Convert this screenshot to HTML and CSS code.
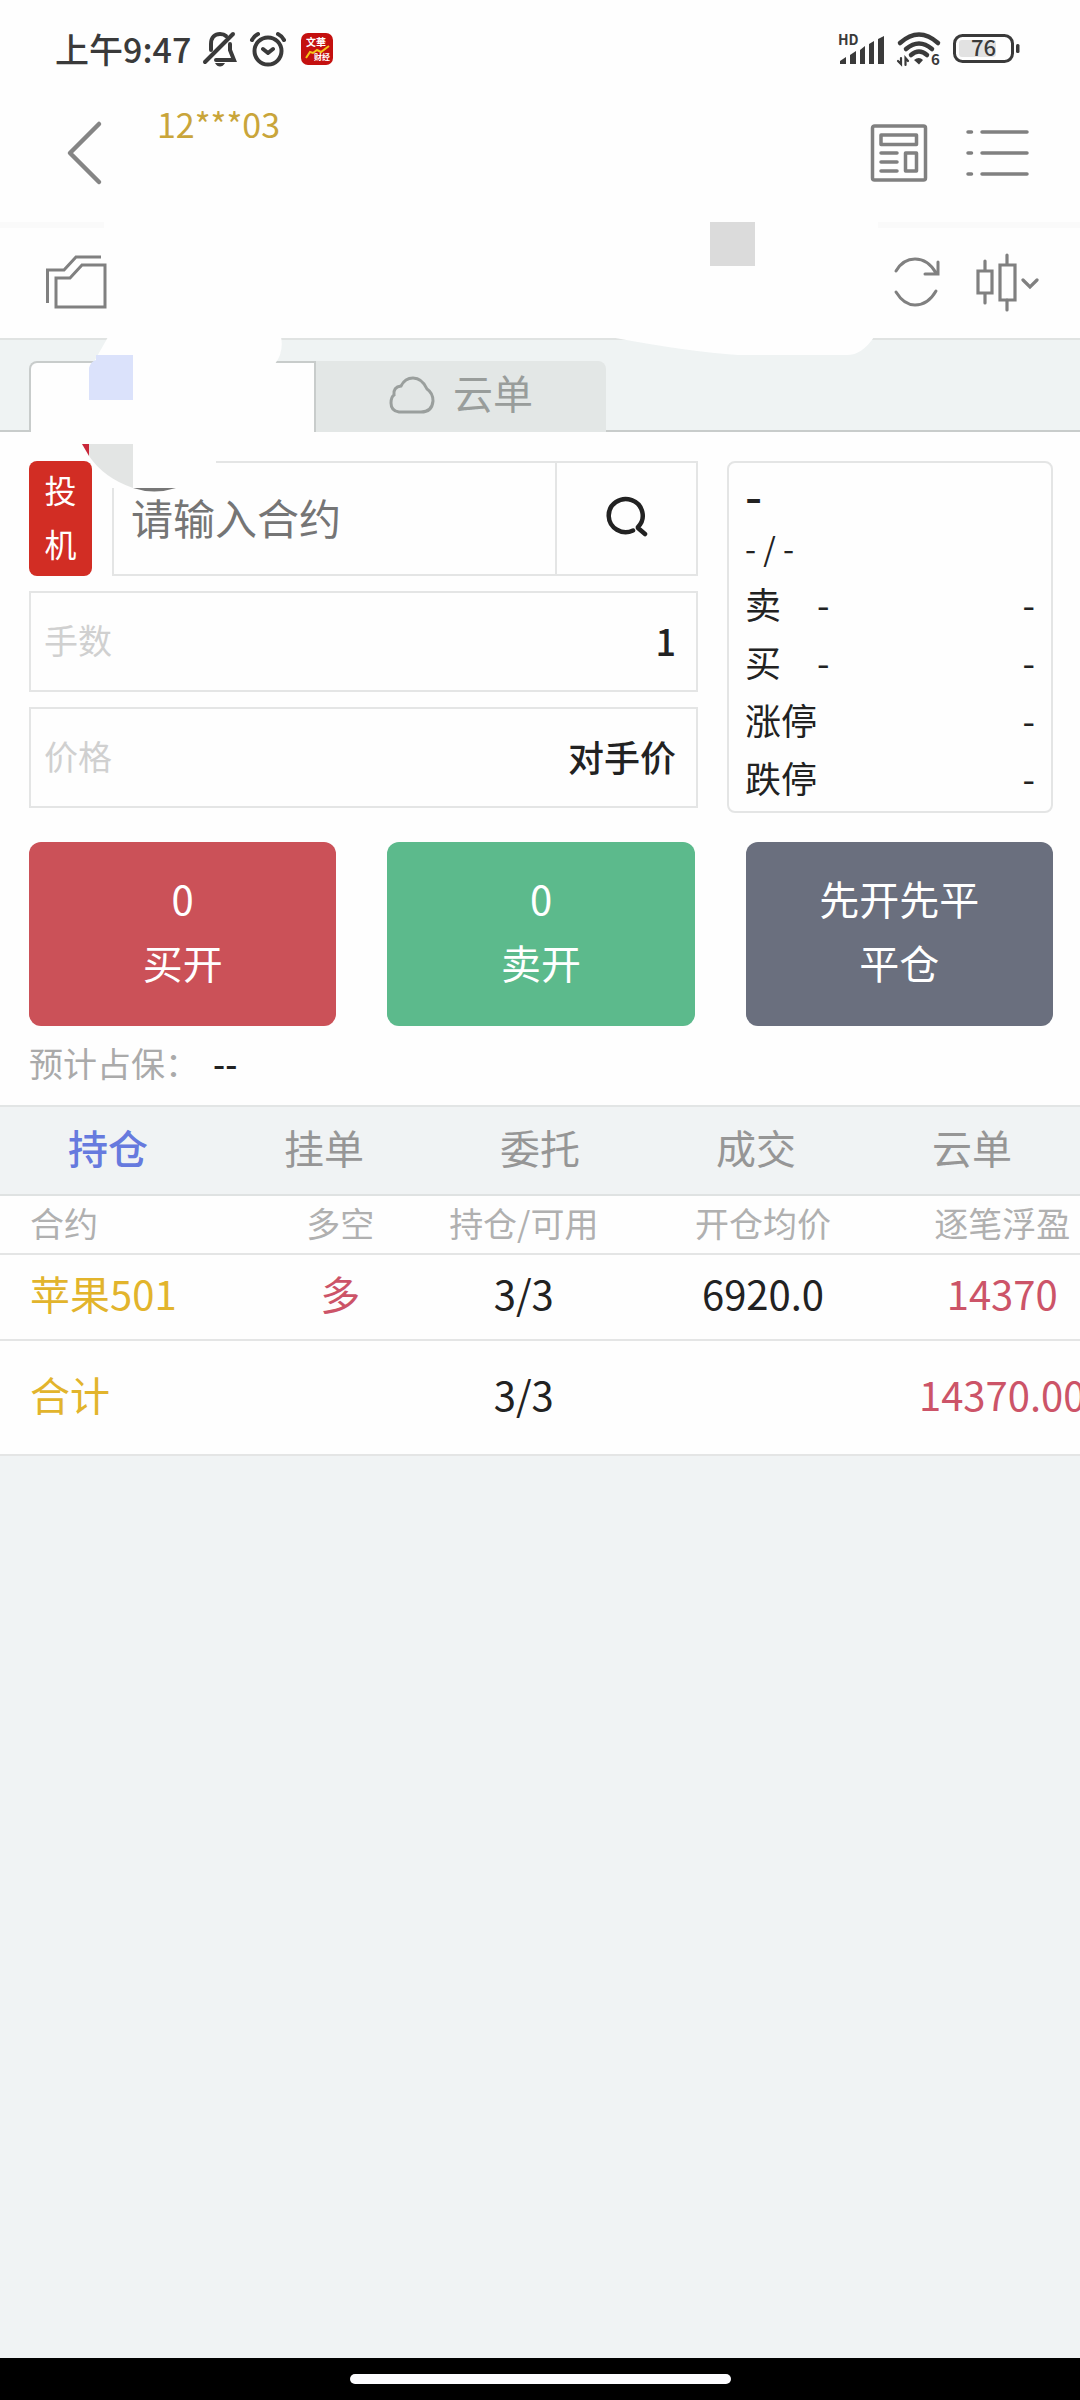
FILE: index.html
```html
<!DOCTYPE html>
<html lang="zh-CN">
<head>
<meta charset="utf-8">
<meta name="viewport" content="width=device-width, initial-scale=1">
<title>交易</title>
<link rel="stylesheet" href="styles.css">
</head>
<body>
<div class="status">
  <div class="status-group">
    <span class="clock">上午9:47</span>
    <svg class="ico-mute" width="34" height="36" viewBox="0 0 34 36" fill="none" stroke="#3a3a3a" stroke-width="4" stroke-linecap="round">
      <path d="M8 19V13C8 6 12 3 17 3C20 3 22 4 23 5M27 13V19L31 29H13"/>
      <path d="M2 31L30 3"/>
      <path d="M12 32H22Q20 35.500 17 35.500Q14 35.500 12 32Z" fill="#3a3a3a" stroke="none"/>
    </svg>
    <svg class="ico-alarm" width="38" height="36" viewBox="0 0 38 36" fill="none" stroke="#3a3a3a" stroke-width="4" stroke-linecap="round" stroke-linejoin="round">
      <circle cx="19" cy="20" r="13.500"/>
      <path d="M14 18L19 22L24 18M3 9Q5 5 9 3M35 9Q33 5 29 3"/>
    </svg>
    <svg class="ico-app" width="32" height="32" viewBox="0 0 32 32">
      <rect width="32" height="32" rx="7" fill="#c4100f"/>
      <text x="5" y="13" font-size="10" font-weight="700" fill="#fff">文華</text>
      <path d="M5 25L9 19L12 20L16 17L20 19L28 13" fill="none" stroke="#f5c518" stroke-width="2"/>
      <text x="13" y="27" font-size="8" font-weight="700" fill="#fff">财经</text>
    </svg>
  </div>
  <div class="status-group">
    <svg class="ico-signal" width="47" height="32" viewBox="0 0 47 32" fill="#3a3a3a">
      <text x="0" y="12" font-size="14" font-weight="700">HD</text>
      <path d="M2 31V28L8 24V31ZM12 31V22L18 18V31ZM22 31V17L27 13V31ZM31 31V11L36 8V31ZM40 31V6L46 3V31Z"/>
    </svg>
    <svg class="ico-wifi" width="44" height="34" viewBox="0 0 44 34" fill="none" stroke="#3a3a3a" stroke-width="4.500" stroke-linecap="round">
      <path d="M3 11Q22 -6 41 11M9 17Q22 6 35 17M14 23Q22 16 30 23"/>
      <path d="M17 28Q22 24 26 28L22 32.500Z" fill="#3a3a3a" stroke="none"/>
      <path d="M4 26V32L1 29M8.500 33V26L11 29" stroke-width="2.200"/>
      <text x="34" y="33" font-size="15" font-weight="700" fill="#3a3a3a" stroke="none">6</text>
    </svg>
    <svg class="ico-battery" width="67" height="30" viewBox="0 0 67 30">
      <rect x="1.500" y="1.500" width="58" height="26" rx="8" fill="none" stroke="#3a3a3a" stroke-width="3"/>
      <rect x="6" y="6" width="37" height="17" rx="3" fill="#e2e2e2"/>
      <rect x="63" y="10" width="3.500" height="9" rx="1.500" fill="#3a3a3a"/>
      <text x="18" y="22" font-size="22" font-weight="500" fill="#3a3a3a">76</text>
    </svg>
  </div>
</div>

<header class="topbar">
  <button class="icon-btn back" aria-label="返回">
    <svg width="36" height="64" viewBox="0 0 36 64" fill="none" stroke="#858585" stroke-width="4.500" stroke-linecap="round" stroke-linejoin="round"><path d="M32 3L3 32L32 61"/></svg>
  </button>
  <span class="account">12***03</span>
  <button class="icon-btn" aria-label="资讯">
    <svg width="58" height="58" viewBox="0 0 58 58" fill="none" stroke="#808080" stroke-width="3.500" stroke-linecap="round" stroke-linejoin="round">
      <rect x="2.500" y="2" width="53" height="54" rx="2"/>
      <rect x="11" y="11" width="35.500" height="9.500"/><rect x="35.500" y="29" width="11" height="18"/>
      <path d="M11 29H27M11 38H27M11 47H27"/>
    </svg>
  </button>
  <button class="icon-btn menu" aria-label="菜单">
    <svg width="64" height="48" viewBox="0 0 64 48" fill="none" stroke="#808080" stroke-width="3.500" stroke-linecap="round"><path d="M2 3H5.500M16 3H61M2 24H5.500M16 24H61M2 45H5.500M16 45H61"/></svg>
  </button>
</header>

<div class="toolbar">
  <button class="icon-btn folder" aria-label="文件夹">
    <svg width="62" height="56" viewBox="0 0 62 56" fill="none" stroke="#808080" stroke-width="3"><path d="M2.500 49V16H19L31 3H56M11 24H25L37 11H60V53H11Z"/></svg>
  </button>
  <button class="icon-btn" aria-label="刷新">
    <svg width="46" height="52" viewBox="0 0 46 52" fill="none" stroke="#808080" stroke-width="3" stroke-linecap="round"><path d="M1 15Q8 3 20 3Q33 3 41 17M43 6V18H30M1 36Q9 49 20 49Q33 49 41 35"/></svg>
  </button>
  <button class="icon-btn chart" aria-label="K线">
    <svg width="64" height="60" viewBox="0 0 64 60" fill="none" stroke="#808080" stroke-width="3.200" stroke-linecap="round"><path d="M10 9V18M10 42V51M32 3V12M32 48V58M48 28L55 35L62 28" /><path d="M3 19H17V41H3ZM25 13H40V48H25Z"/></svg>
  </button>
</div>

<nav class="sheets">
  <button class="sheet sheet-on" aria-label="下单"></button>
  <button class="sheet">
    <svg width="46" height="38" viewBox="0 0 46 38" fill="none" stroke="#9a9f9d" stroke-width="3"><path d="M10 36Q2 35 2 27Q2 21 5 19Q4 11 12 10Q16 2 24 2Q33 2 38 13Q44 17 44 25Q43 36 32 36Z"/></svg>
    <span>云单</span>
  </button>
</nav>

<svg class="patches" width="1080" height="280" viewBox="0 220 1080 280" aria-hidden="true">
  <path d="M108 337H281Q284 352 275 364H96L95 360Z" fill="#fefefe"/>
  <path d="M610 337H874Q862 355 847 355H738Q690 352 610 337Z" fill="#fefefe"/>
  <path d="M104 222H878V234H104Z" fill="#fefefe"/>
  <rect x="710" y="222" width="45" height="44" fill="#dbdbdb"/>
  <path d="M96 355H133V400H89V368Q91 361 96 360Z" fill="#dbe2fb"/>
  <path d="M108 455H216V488H108Z" fill="#fefefe"/>
  <path d="M82 444H89V456Z" fill="#c9283a"/>
  <path d="M89 444H133V488Q104 478 89 456Z" fill="#e3e5e4"/>
  <path d="M133 488H176Q154 495 133 488Z" fill="#777"/>
</svg>

<form class="order" onsubmit="return false">
  <div class="fields">
    <div class="contract">
      <button class="hedge" type="button"><span>投</span><span>机</span></button>
      <div class="search">
        <input class="search-input" type="text" placeholder="请输入合约" aria-label="合约">
        <button class="search-btn" type="button" aria-label="搜索">
          <svg width="42" height="42" viewBox="0 0 42 42" fill="none" stroke="#222" stroke-width="4.500" stroke-linecap="round"><path d="M27 34.500A17 16.500 0 1 1 32 31M32 32L39 38"/></svg>
        </button>
      </div>
    </div>
    <div class="field">
      <label for="qty">手数</label>
      <input id="qty" type="text" inputmode="numeric" value="1">
    </div>
    <div class="field">
      <label for="price">价格</label>
      <input id="price" type="text" value="对手价">
    </div>
  </div>
  <div class="quote">
    <div class="quote-last">-</div>
    <div class="quote-change">- / -</div>
    <div class="quote-row"><span class="side">卖</span><span>-</span><span class="vol">-</span></div>
    <div class="quote-row"><span class="side">买</span><span>-</span><span class="vol">-</span></div>
    <div class="quote-row"><span>涨停</span><span class="vol">-</span></div>
    <div class="quote-row"><span>跌停</span><span class="vol">-</span></div>
  </div>
</form>

<div class="actions">
  <button class="act buy"><span>0</span><span>买开</span></button>
  <button class="act sell"><span>0</span><span>卖开</span></button>
  <button class="act close"><span>先开先平</span><span>平仓</span></button>
</div>
<p class="margin"><span>预计占保：</span><b>--</b></p>

<nav class="tabs">
  <button class="tab tab-on">持仓</button>
  <button class="tab">挂单</button>
  <button class="tab">委托</button>
  <button class="tab">成交</button>
  <button class="tab">云单</button>
</nav>

<main class="positions">
  <table>
    <colgroup><col class="c-name"><col class="c-side"><col class="c-qty"><col class="c-avg"><col class="c-pnl"></colgroup>
    <thead>
      <tr><th>合约</th><th>多空</th><th>持仓/可用</th><th>开仓均价</th><th>逐笔浮盈</th></tr>
    </thead>
    <tbody>
      <tr class="row"><td class="gold">苹果501</td><td class="red">多</td><td>3/3</td><td>6920.0</td><td class="red">14370</td></tr>
      <tr class="total"><td class="gold">合计</td><td></td><td>3/3</td><td></td><td class="red"><span class="center">14370.00</span></td></tr>
    </tbody>
  </table>
</main>

<footer class="gesture"><span class="pill"></span></footer>
</body>
</html>
```
FILE: styles.css
```css
* { box-sizing: border-box; }
body {
  margin: 0;
  position: relative;
  min-height: 100vh;
  display: flex;
  flex-direction: column;
  overflow-x: hidden;
  background: #fefefe;
  color: #222;
  font-family: "Noto Sans CJK SC", "Noto Sans", sans-serif;
  font-size: 40px;
}
button, input {
  margin: 0;
  padding: 0;
  border: 0;
  border-radius: 0;
  background: none;
  color: inherit;
  font: inherit;
}
svg { display: block; flex: none; overflow: visible; }

.status {
  height: 98px;
  padding: 0 60px 0 55px;
  display: flex;
  align-items: center;
  justify-content: space-between;
  color: #3a3a3a;
}
.status-group { display: flex; align-items: center; gap: 12px; }
.clock { font-size: 34px; font-weight: 500; line-height: 40px; }
.ico-app { margin-left: 2px; }

.topbar {
  height: 130px;
  padding: 0 50px 14px 67px;
  border-bottom: 6px solid #fafafa;
  display: flex;
  align-items: center;
}
.icon-btn { display: flex; }
.account {
  flex: 1;
  align-self: flex-start;
  margin-left: 54px;
  color: #c9a53a;
  font-size: 34px;
  line-height: 52px;
}
.menu { margin-left: 38px; }

.toolbar {
  height: 110px;
  padding: 0 41px 2px 45px;
  display: flex;
  align-items: center;
}
.folder { margin-right: auto; }
.chart { margin-left: 34px; }

.sheets {
  height: 94px;
  padding: 21px 30px 0 29px;
  border-top: 2px solid #e0e3e2;
  border-bottom: 2px solid #c8cccb;
  background: #eff3f3;
  display: flex;
}
.sheet {
  width: 290px;
  height: 71px;
  display: flex;
  align-items: center;
  justify-content: center;
  gap: 18px;
  padding-bottom: 3px;
  background: #e3e7e6;
  border-radius: 0 8px 0 0;
  color: #999d9b;
}
.sheet span { padding-bottom: 6px; }
.sheet-on {
  width: 287px;
  border: 2px solid #c8cccb;
  border-bottom: 0;
  border-radius: 8px 0 0 0;
  background: #fefefe;
}

.patches { position: absolute; left: 0; top: 220px; pointer-events: none; }

.order {
  padding: 29px 27px 0 29px;
  display: grid;
  grid-template-columns: 669fr 326fr;
  gap: 29px;
}
.fields { display: flex; flex-direction: column; gap: 15px; min-width: 0; }
.contract { display: flex; gap: 20px; height: 115px; }
.hedge {
  width: 63px;
  padding-bottom: 5px;
  border-radius: 8px;
  background: #d22d24;
  color: #fff;
  font-size: 32px;
  line-height: 54px;
}
.hedge span, .act span { display: block; }
.search { flex: 1; display: flex; min-width: 0; border: 2px solid #e4e5e5; }
.search-input { flex: 1; min-width: 0; padding: 0 0 5px 17px; font-size: 42px; }
.search-input::placeholder { color: #757575; opacity: 1; }
.search-btn {
  width: 141px;
  padding-bottom: 3px;
  border-left: 2px solid #e4e5e5;
  display: flex;
  align-items: center;
  justify-content: center;
}
.field {
  height: 101px;
  padding: 0 20px 4px 13px;
  border: 2px solid #e4e5e5;
  display: flex;
  align-items: center;
}
.field label { color: #d0d0d0; font-size: 34px; }
.field input { flex: 1; min-width: 0; text-align: right; font-size: 36px; font-weight: 500; }

.quote {
  height: 352px;
  padding: 2px 16px 0;
  border: 2px solid #e4e5e5;
  border-radius: 8px;
  font-size: 36px;
  line-height: 58px;
}
.quote-last { font-size: 48px; font-weight: 500; }
.quote-change { margin-bottom: 3px; font-size: 32px; line-height: 48px; }
.quote-row { display: flex; }
.side { width: 72px; }
.vol { margin-left: auto; }

.actions {
  padding: 29px 27px 0 29px;
  display: grid;
  grid-template-columns: repeat(3, 1fr);
  gap: 51px;
}
.act {
  height: 184px;
  padding-bottom: 8px;
  border-radius: 12px;
  color: #fff;
  line-height: 64px;
}
.buy { background: #cb5158; }
.sell { background: #5cba8c; }
.close { background: #6a6f7e; }

.margin {
  margin: 0;
  padding: 0 29px 6px;
  height: 79px;
  display: flex;
  align-items: center;
  color: #aaa;
  font-size: 34px;
}
.margin b { color: #222; font-weight: 500; margin-left: 14px; }

.tabs {
  height: 91px;
  border-top: 2px solid #e2e5e5;
  border-bottom: 2px solid #dfe2e2;
  background: #f0f3f4;
  display: grid;
  grid-template-columns: repeat(5, 1fr);
}
.tab { color: #969696; padding-bottom: 8px; }
.tab-on { color: #667ade; font-weight: 500; }

.positions { flex: 1; background: #f0f3f4; }
table {
  width: 100%;
  table-layout: fixed;
  border-collapse: collapse;
  background: #fefefe;
  text-align: center;
}
.c-name { width: 21.7%; }
.c-side { width: 19.6%; }
.c-qty { width: 14.4%; }
.c-avg { width: 29.9%; }
.c-pnl { width: 14.4%; }
th, td { padding: 0; white-space: nowrap; font-weight: 400; border-bottom: 2px solid #e4e5e5; }
th:first-child, td:first-child { text-align: left; padding-left: 30px; }
th { height: 58px; padding-bottom: 3px; color: #b0b0b0; font-size: 34px; line-height: 40px; }
td { line-height: 56px; }
.row td { height: 86px; padding-bottom: 8px; }
.total td { height: 115px; padding-bottom: 8px; }
.gold { color: #e2b42c; }
.red { color: #cc5468; }
.center { display: flex; justify-content: center; }

.gesture {
  height: 42px;
  background: #000;
  display: flex;
  align-items: center;
  justify-content: center;
}
.pill { width: 381px; height: 10px; border-radius: 5px; background: #fcfcff; }
```
